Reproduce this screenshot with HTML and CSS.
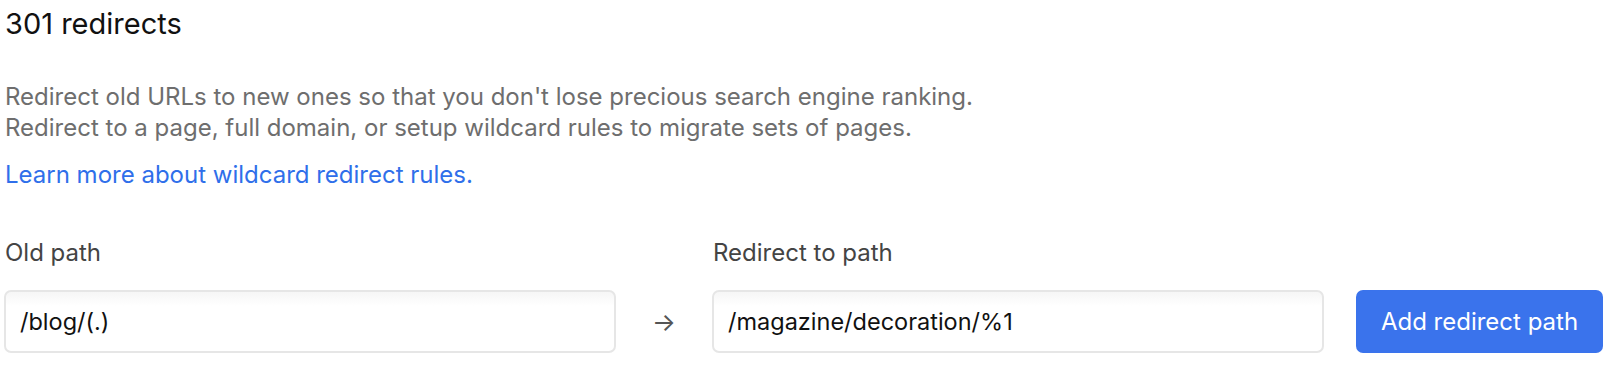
FILE: index.html
```html
<!DOCTYPE html>
<html lang="en">
<head>
<meta charset="utf-8">
<title>301 redirects</title>
<link rel="stylesheet" href="styles.css">
</head>
<body>
<main class="panel">
  <h1 class="title">301 redirects</h1>
  <p class="desc">Redirect old URLs to new ones so that you don't lose precious search engine ranking.<br>Redirect to a page, full domain, or setup wildcard rules to migrate sets of pages.</p>
  <a class="link" href="#">Learn more about wildcard redirect rules.</a>
  <form class="row">
    <label class="field">
      <span class="label">Old path</span>
      <input class="input" type="text" value="/blog/(.)">
    </label>
    <span class="arrow">→</span>
    <label class="field">
      <span class="label">Redirect to path</span>
      <input class="input" type="text" value="/magazine/decoration/%1">
    </label>
    <button class="btn" type="button">Add redirect path</button>
  </form>
</main>
</body>
</html>
```
FILE: styles.css
```css
* { box-sizing: border-box; }
html, body { margin: 0; padding: 0; background: #fff; }
body { font-family: Inter, "Noto Sans", sans-serif; color: #111; }
.panel { padding: 4px 11px 0 4px; }
.title { margin: 0; font-size: 29px; line-height: 40px; font-weight: 400; color: #111; padding-left: 1px; }
.desc { margin: 37px 0 0; font-size: 24px; line-height: 31px; color: #6e6e6e; padding-left: 1px; }
.link { display: block; margin-top: 16px; font-size: 24px; line-height: 31px; color: #2f6fea; text-decoration: none; padding-left: 1px; }
.row { display: flex; align-items: flex-end; margin-top: 49px; }
.field { flex: 1; display: flex; flex-direction: column; gap: 23px; }
.label { font-size: 24px; line-height: 28px; color: #444; padding-left: 1px; }
.input { height: 63px; border: 2px solid #e6e6e6; border-radius: 7px; padding: 0 14px; font-family: inherit; font-size: 23.5px; color: #111; background: linear-gradient(#f6f6f6, #fff 14px); outline: none; }
.arrow { width: 96px; height: 63px; display: flex; align-items: center; justify-content: center; font-size: 25px; color: #555; }
.btn { width: 247px; height: 63px; margin-left: 32px; border: none; border-radius: 7px; background: #3a73ec; color: #fff; font-family: inherit; font-size: 24px; cursor: pointer; }
```
